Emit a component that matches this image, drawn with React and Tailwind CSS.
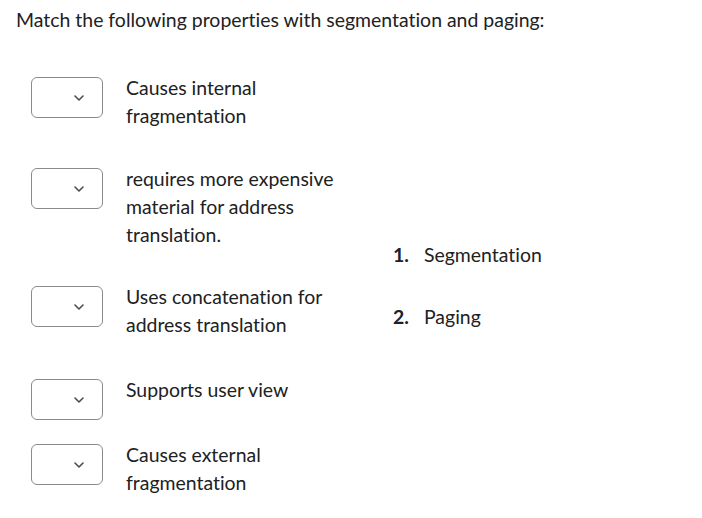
import React from 'react';

const rows=[
  {text: 'Causes internal fragmentation', mt: 'mt-0'},
  {text: 'requires more expensive material for address translation.', mt: 'mt-[35px]'},
  {text: 'Uses concatenation for address translation', mt: 'mt-[34px]'},
  {text: 'Supports user view', mt: 'mt-[37px]'},
  {text: 'Causes external fragmentation', mt: 'mt-[37px]'},
];

const choices=['Segmentation', 'Paging'];

const Chevron=() => (
  <svg width="10" height="6" viewBox="0 0 10 6" fill="none">
    <path d="M1 1l4 4 4-4" stroke="#494c4e" strokeWidth="1.6" strokeLinecap="round" strokeLinejoin="round" />
  </svg>
);

const SelectBox=() => (
  <div className="h-7 w-[72px] shrink-0">
    <div className="mt-[3px] flex h-[41px] w-[72px] items-center justify-end rounded-md border border-[#8a8b8c] bg-white pr-[18px]">
      <Chevron />
    </div>
  </div>
);

export default function App() {
  return (
    <div className="min-h-[518px] w-[702px] bg-white pl-4 pt-[6px] font-['Lato','Liberation_Sans',sans-serif] text-[19.45px] leading-[28px] text-[#202122] [font-variant-ligatures:none]">
      <p>Match the following properties with segmentation and paging:</p>

      <div className="mt-[40px] flex items-center pl-[15px]">
        <div className="flex flex-col">
          {rows.map((row, index) => (
            <div key={index} className={`flex items-start gap-[23px] ${row.mt}`}>
              <SelectBox />
              <p className="w-[240px]">{row.text}</p>
            </div>
          ))}
        </div>

        <ol className="ml-[27px] flex flex-col gap-[34px]">
          {choices.map((choice, index) => (
            <li key={choice} className="flex">
              <span className="w-[31px] font-bold">{index+1}.</span>
              <span>{choice}</span>
            </li>
          ))}
        </ol>
      </div>
    </div>
  );
}
